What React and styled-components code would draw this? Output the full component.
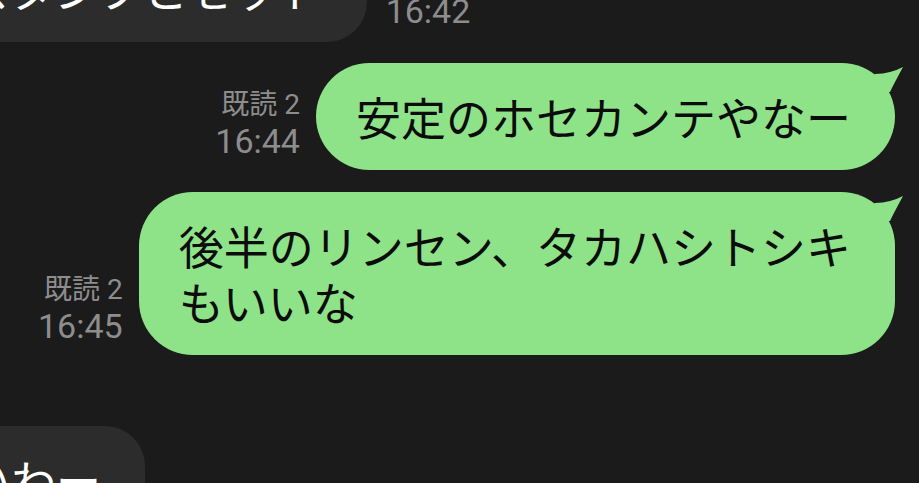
import React from "react";
import styled, { createGlobalStyle } from "styled-components";

const GlobalStyle = createGlobalStyle`
  html, body {
    margin: 0;
    padding: 0;
    background: #1b1b1b;
    overflow: hidden;
  }
`;

const Screen = styled.div`
  width: 919px;
  height: 483px;
  overflow: hidden;
  background: #1b1b1b;
`;

const Thread = styled.div`
  display: flex;
  flex-direction: column;
  margin-top: -65px;
`;

const Row = styled.div`
  display: flex;
  align-items: flex-end;
  justify-content: ${(props) => (props.$out ? "flex-end" : "flex-start")};
  margin-top: ${(props) => props.$gap || 0}px;
  margin-left: ${(props) => props.$shift || 0}px;
  padding-right: ${(props) => (props.$out ? "24px" : "0")};
`;

const Bubble = styled.div`
  position: relative;
  flex-shrink: 0;
  padding: 26px 44px 25px 40px;
  border-radius: ${(props) => (props.$out ? "54px" : "40px")};
  background: ${(props) => (props.$out ? "#8ee389" : "#2c2c2c")};
  color: ${(props) => (props.$out ? "#0c0c0c" : "#ffffff")};
  font-family: "Noto Sans CJK JP", "Noto Sans", sans-serif;
  font-size: 45px;
  line-height: 56px;
  white-space: nowrap;
`;

const Lines = styled.span`
  display: block;
  white-space: pre-line;
`;

const Tail = styled.svg`
  position: absolute;
  top: 0;
  right: -11px;
  width: 44px;
  height: 36px;
`;

const Meta = styled.div`
  display: flex;
  flex-direction: column;
  align-items: ${(props) => (props.$out ? "flex-end" : "flex-start")};
  margin: ${(props) => (props.$out ? "0 16px 10px 0" : "0 0 12px 19px")};
  color: #8d8d8d;
`;

const ReadLabel = styled.span`
  font-family: Roboto, "Noto Sans CJK JP", sans-serif;
  font-size: 28px;
  line-height: 34px;
`;

const Time = styled.span`
  font-family: Roboto, "Noto Sans", sans-serif;
  font-size: 34px;
  line-height: 38px;
`;

const BubbleTail = () => (
  <Tail viewBox="0 0 44 36">
    <path
      d="M13 11 Q29 10.5 41 4 Q31.5 21.5 28 29 L10 30 L10 14 Z"
      fill="#8ee389"
    />
  </Tail>
);

const Incoming = ({ text, time, shift, gap }) => (
  <Row $shift={shift} $gap={gap}>
    <Bubble>{text}</Bubble>
    {time && (
      <Meta>
        <Time>{time}</Time>
      </Meta>
    )}
  </Row>
);

const Outgoing = ({ text, time, read, gap }) => (
  <Row $out $gap={gap}>
    <Meta $out>
      <ReadLabel>既読 {read}</ReadLabel>
      <Time>{time}</Time>
    </Meta>
    <Bubble $out>
      <Lines>{text}</Lines>
      <BubbleTail />
    </Bubble>
  </Row>
);

const App = () => (
  <Screen>
    <GlobalStyle />
    <Thread>
      <Incoming text="スタンプとセット" time="16:42" shift={-76} />
      <Outgoing text="安定のホセカンテやなー" read={2} time="16:44" gap={21} />
      <Outgoing
        text={"後半のリンセン、タカハシトシキ\nもいいな"}
        read={2}
        time="16:45"
        gap={22}
      />
      <Incoming text="すごいわー" shift={-164} gap={71} />
    </Thread>
  </Screen>
);

export default App;
